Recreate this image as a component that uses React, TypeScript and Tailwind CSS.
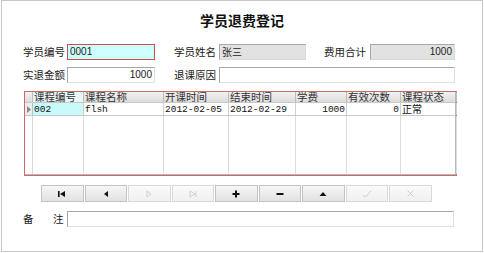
import React from 'react';

const cjk = { fontFamily: '"Noto Sans CJK SC", "Liberation Sans", sans-serif' };
const sans = { fontFamily: '"Liberation Sans", "Noto Sans CJK SC", sans-serif' };
const mono = { fontFamily: '"Liberation Mono", "Noto Sans CJK SC", monospace' };

const Label = ({ text, w }: { text: string; w: string }) => (
  <div className={`${w} shrink-0 text-[10.5px] leading-[12px] text-[#1a1a1a]`} style={cjk}>
    {text}
  </div>
);

const Field = ({ w, value = '', tone = 'white', right = false }: { w: string; value?: string; tone?: 'white' | 'gray' | 'cyan'; right?: boolean }) => {
  const toneCls =
    tone === 'gray'
      ? 'bg-[#e2e2e2] border-[#a8a8a8] border-r-[#d8d8d8] border-b-[#d8d8d8]'
      : tone === 'cyan'
      ? 'bg-[#ccffff] border-[#c85050]'
      : 'bg-white border-[#a8a8a8] border-r-[#e0e0e0] border-b-[#e0e0e0]';
  return (
    <div
      className={`${w} h-[16px] shrink-0 border ${toneCls} flex items-center px-[2px] text-[10px] leading-[14px] text-[#222] ${right ? 'justify-end' : ''}`}
      style={tone === 'gray' && !right ? cjk : sans}
    >
      {value}
    </div>
  );
};

const cols = [
  { title: '课程编号', w: 'w-[51px]' },
  { title: '课程名称', w: 'w-[80px]' },
  { title: '开课时间', w: 'w-[65px]' },
  { title: '结束时间', w: 'w-[67px]' },
  { title: '学费', w: 'w-[51px]' },
  { title: '有效次数', w: 'w-[54px]' },
  { title: '课程状态', w: 'w-[56px]' },
];

const row = ['002', 'flsh', '2012-02-05', '2012-02-29', '1000', '0', '正常'];

const NavIcon = ({ kind }: { kind: string }) => {
  const dark = '#111';
  const dis = '#c8c8c8';
  switch (kind) {
    case 'first':
      return (
        <svg width="10" height="8" viewBox="0 0 10 8">
          <rect x="1" y="1" width="1.6" height="6" fill={dark} />
          <path d="M8 1 L3 4 L8 7 Z" fill={dark} />
        </svg>
      );
    case 'prior':
      return (
        <svg width="8" height="8" viewBox="0 0 8 8">
          <path d="M6 1 L2 4 L6 7 Z" fill={dark} />
        </svg>
      );
    case 'next':
      return (
        <svg width="8" height="8" viewBox="0 0 8 8">
          <path d="M2 1 L6 4 L2 7 Z" fill="none" stroke={dis} strokeWidth="0.8" />
        </svg>
      );
    case 'last':
      return (
        <svg width="10" height="8" viewBox="0 0 10 8">
          <path d="M2 1 L7 4 L2 7 Z" fill="none" stroke={dis} strokeWidth="0.8" />
          <rect x="7.5" y="1" width="0.8" height="6" fill={dis} />
        </svg>
      );
    case 'plus':
      return (
        <svg width="8" height="8" viewBox="0 0 8 8">
          <rect x="0.5" y="3" width="7" height="2" fill={dark} />
          <rect x="3" y="0.5" width="2" height="7" fill={dark} />
        </svg>
      );
    case 'minus':
      return (
        <svg width="8" height="8" viewBox="0 0 8 8">
          <rect x="0.5" y="3" width="7" height="2" fill={dark} />
        </svg>
      );
    case 'edit':
      return (
        <svg width="8" height="8" viewBox="0 0 8 8">
          <path d="M0.5 6 L4 2 L7.5 6 Z" fill={dark} />
        </svg>
      );
    case 'post':
      return (
        <svg width="10" height="8" viewBox="0 0 10 8">
          <path d="M1 5 L3.5 7 L9 1" fill="none" stroke={dis} strokeWidth="0.9" />
        </svg>
      );
    default:
      return (
        <svg width="9" height="9" viewBox="0 0 9 9">
          <path d="M1.5 1.5 L7.5 7.5 M7.5 1.5 L1.5 7.5" fill="none" stroke={dis} strokeWidth="0.9" />
        </svg>
      );
  }
};

export default function App() {
  const navs = ['first', 'prior', 'next', 'last', 'plus', 'minus', 'edit', 'post', 'cancel'];
  return (
    <div className="w-[484px] h-[253px] bg-white overflow-hidden">
      <div className="ml-[1px] w-[482px] h-[252px] border border-[#c8c8c8] flex flex-col">
        <div className="h-[43px] pt-[11px] text-center text-[14px] leading-[16px] font-bold text-[#111]" style={cjk}>
          学员退费登记
        </div>

        <div className="flex items-center pl-[21px] h-[16px]">
          <Label text="学员编号" w="w-[44px]" />
          <Field w="w-[88px]" value="0001" tone="cyan" />
          <div className="w-[19px]" />
          <Label text="学员姓名" w="w-[45px]" />
          <Field w="w-[87px]" value="张三" tone="gray" />
          <div className="w-[18px]" />
          <Label text="费用合计" w="w-[46px]" />
          <Field w="w-[85px]" value="1000" tone="gray" right />
        </div>

        <div className="flex items-center pl-[21px] h-[16px] mt-[7px]">
          <Label text="实退金额" w="w-[44px]" />
          <Field w="w-[88px]" value="1000" right />
          <div className="w-[19px]" />
          <Label text="退课原因" w="w-[45px]" />
          <Field w="w-[236px]" />
        </div>

        <div className="ml-[22px] mt-[8px] w-[433px] h-[85px] border border-[#cc6a6a] flex flex-col">
          <div className="flex-1 flex flex-col border-b border-[#b8b8b8] border-r border-r-[#b8b8b8]">
            <div className="flex h-[11px] bg-gradient-to-b from-[#f2f2f2] to-[#dcdcdc] border-b border-[#c8c8c8]">
              <div className="w-[8px] shrink-0 border-r border-[#bdbdbd]" />
              {cols.map((c, i) => (
                <div
                  key={c.title}
                  className={`${c.w} h-[10px] shrink-0 border-r border-[#bdbdbd] pl-[1px] text-[10.5px] leading-[10px] text-[#333] whitespace-nowrap ${i === 0 ? 'bg-[#e9f7f7]' : ''}`}
                  style={cjk}
                >
                  {c.title}
                </div>
              ))}
            </div>
            <div className="flex h-[13px] border-b border-[#c8c8c8]">
              <div className="w-[8px] shrink-0 border-r border-[#bdbdbd] bg-[#ececec] flex items-center justify-center">
                <svg width="4" height="7" viewBox="0 0 4 7">
                  <path d="M0 0 L4 3.5 L0 7 Z" fill="#8a8a8a" />
                </svg>
              </div>
              {cols.map((c, i) => (
                <div
                  key={c.title}
                  className={`${c.w} h-[12px] shrink-0 border-r border-[#d0d0d0] px-[1px] whitespace-nowrap text-[#111] ${
                    i === 6 ? 'text-[10px] leading-[12px]' : 'pt-[1px] text-[9.5px] leading-[11px] overflow-hidden'
                  } ${i === 0 ? 'bg-[#c8fafa]' : ''} ${i === 4 || i === 5 ? 'text-right' : ''}`}
                  style={i === 6 ? cjk : mono}
                >
                  {row[i]}
                </div>
              ))}
            </div>
            <div className="flex flex-1">
              <div className="w-[8px] shrink-0 border-r border-[#d8d8d8]" />
              {cols.map((c) => (
                <div key={c.title} className={`${c.w} shrink-0 border-r border-[#dcdcdc]`} />
              ))}
            </div>
          </div>
        </div>

        <div className="flex ml-[39px] mt-[9px] gap-px">
          {navs.map((n, i) => (
            <div
              key={n}
              className={`w-[42.5px] h-[17px] shrink-0 flex items-center justify-center border border-[#c4c4c4] bg-gradient-to-b ${
                i === 2 || i === 3 || i === 7 || i === 8 ? 'from-[#fafafa] to-[#f0f0f0] border-[#dadada]' : 'from-[#f6f6f6] to-[#e2e2e2]'
              }`}
            >
              <NavIcon kind={n} />
            </div>
          ))}
        </div>

        <div className="flex items-center pl-[21px] h-[16px] mt-[9px]">
          <div className="w-[30px] shrink-0 text-[10.5px] leading-[12px] text-[#1a1a1a]" style={cjk}>备</div>
          <div className="w-[14px] shrink-0 text-[10.5px] leading-[12px] text-[#1a1a1a]" style={cjk}>注</div>
          <Field w="w-[387px]" />
        </div>
      </div>
    </div>
  );
}
